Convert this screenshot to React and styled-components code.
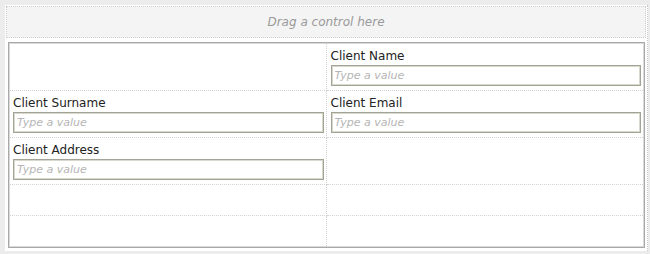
import React from "react";
import styled, { createGlobalStyle } from "styled-components";

const Global = createGlobalStyle`
  html, body { margin: 0; padding: 0; }
  body {
    background: #ececec;
    font-family: "DejaVu Sans", Verdana, sans-serif;
    padding: 5px 2px 3px 5px;
  }
  * { box-sizing: border-box; }
`;

const Canvas = styled.div`
  background: #ffffff;
  padding: 1px 1px 3px 1px;
  border-right: 1px dotted #c8c8c8;
`;

const DropZone = styled.div`
  height: 32px;
  border: 1px dotted #cfcfcf;
  background: #f4f4f4;
  display: flex;
  align-items: center;
  justify-content: center;
  font-style: italic;
  font-size: 12px;
  color: #9a9a9a;
`;

const FormTable = styled.div`
  margin: 4px 1px 0 2px;
  border: 1px solid #a9a9a9;
  box-shadow: inset 0 0 0 1px #d9d9d9;
  padding: 1px;
  display: grid;
  grid-template-columns: 1fr 1fr;
`;

const Cell = styled.div`
  height: ${(p) => p.$h}px;
  padding: 4px 2px 0 ${(p) => (p.$right ? 4 : 3)}px;
  border-bottom: ${(p) => (p.$last ? "none" : "1px dotted #d2d2d2")};
  border-right: ${(p) => (p.$right ? "none" : "1px dotted #d2d2d2")};
  display: flex;
  flex-direction: column;
`;

const Label = styled.div`
  font-size: 12px;
  line-height: 16px;
  color: #222;
  margin-bottom: 1px;
`;

const Input = styled.input`
  height: 21px;
  width: 100%;
  border: 1px solid #a4a496;
  box-shadow: inset 0 0 0 1px #d8d8cc;
  padding: 0 3px;
  font-family: "DejaVu Sans", Verdana, sans-serif;
  font-size: 11px;
  font-style: italic;
  color: #333;
  background: #fff;
  outline: none;
  &::placeholder { color: #b5b5b5; }
`;

const rows = [
  { h: 46, cells: [null, "Client Name"] },
  { h: 46, cells: ["Client Surname", "Client Email"] },
  { h: 46, cells: ["Client Address", null] },
  { h: 30, cells: [null, null] },
  { h: 30, cells: [null, null], last: true },
];

function Field({ label, h, right, last }) {
  return (
    <Cell $h={h} $right={right} $last={last}>
      {label && (
        <>
          <Label>{label}</Label>
          <Input placeholder="Type a value" />
        </>
      )}
    </Cell>
  );
}

export default function App() {
  return (
    <>
      <Global />
      <Canvas>
        <DropZone>Drag a control here</DropZone>
        <FormTable>
          {rows.map((r, i) =>
            r.cells.map((c, j) => (
              <Field
                key={`${i}-${j}`}
                label={c}
                h={r.h + (r.last ? 0 : 1)}
                right={j === 1}
                last={r.last}
              />
            ))
          )}
        </FormTable>
      </Canvas>
    </>
  );
}
